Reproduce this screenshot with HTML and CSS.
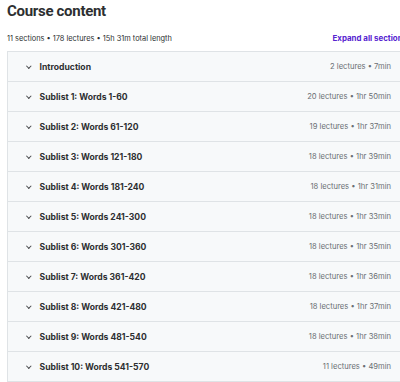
FILE: index.html
```html
<!DOCTYPE html>
<html lang="en">
<head>
    <meta charset="UTF-8">
    <title>Course content</title>
    <link rel="stylesheet" href="styles.css">
</head>
<body>
    <div class="course">
        <h2>Course content</h2>
        <div class="summary">
            <span>11 sections • 178 lectures • 15h 31m total length</span>
            <a href="#">Expand all sections</a>
        </div>

        <div class="sections">
            <div class="row"><span class="chev"></span><span class="name">Introduction</span><span class="meta">2 lectures • 7min</span></div>
            <div class="row"><span class="chev"></span><span class="name">Sublist 1: Words 1-60</span><span class="meta">20 lectures • 1hr 50min</span></div>
            <div class="row"><span class="chev"></span><span class="name">Sublist 2: Words 61-120</span><span class="meta">19 lectures • 1hr 37min</span></div>
            <div class="row"><span class="chev"></span><span class="name">Sublist 3: Words 121-180</span><span class="meta">18 lectures • 1hr 39min</span></div>
            <div class="row"><span class="chev"></span><span class="name">Sublist 4: Words 181-240</span><span class="meta">18 lectures • 1hr 31min</span></div>
            <div class="row"><span class="chev"></span><span class="name">Sublist 5: Words 241-300</span><span class="meta">18 lectures • 1hr 33min</span></div>
            <div class="row"><span class="chev"></span><span class="name">Sublist 6: Words 301-360</span><span class="meta">18 lectures • 1hr 35min</span></div>
            <div class="row"><span class="chev"></span><span class="name">Sublist 7: Words 361-420</span><span class="meta">18 lectures • 1hr 36min</span></div>
            <div class="row"><span class="chev"></span><span class="name">Sublist 8: Words 421-480</span><span class="meta">18 lectures • 1hr 37min</span></div>
            <div class="row"><span class="chev"></span><span class="name">Sublist 9: Words 481-540</span><span class="meta">18 lectures • 1hr 38min</span></div>
            <div class="row"><span class="chev"></span><span class="name">Sublist 10: Words 541-570</span><span class="meta">11 lectures • 49min</span></div>
        </div>
    </div>
</body>
</html>
```
FILE: styles.css
```css
body {
    margin: 0;
    background: #fff;
    font-family: Inter, "Noto Sans", sans-serif;
    color: #2d2f31;
    overflow: hidden;
}

.course {
    padding: 0 0 0 7px;
    width: 400px;
}

h2 {
    margin: 0;
    padding-top: 2px;
    font-family: Roboto, Inter, sans-serif;
    font-size: 15px;
    font-weight: 700;
    line-height: 18px;
    letter-spacing: -0.3px;
}

.summary {
    display: flex;
    justify-content: space-between;
    align-items: center;
    margin-top: 10px;
    height: 16px;
    font-size: 7.4px;
    color: #2d2f31;
}

.summary a {
    color: #5624d0;
    font-weight: 700;
    text-decoration: none;
    font-size: 7.9px;
    white-space: nowrap;
}

.sections {
    margin-top: 5px;
    border: 1px solid #dfe3e6;
    border-bottom: none;
    width: 400px;
}

.row {
    display: flex;
    align-items: center;
    height: 29px;
    border-bottom: 1px solid #dfe3e6;
    background: #f7f9fa;
    padding: 0 17px 0 17px;
}

.chev {
    width: 2.6px;
    height: 2.6px;
    border-right: 1.1px solid #4a4c4e;
    border-bottom: 1.1px solid #4a4c4e;
    transform: rotate(45deg);
    margin: -2px 9px 0 2px;
}

.name {
    flex: 1;
    font-size: 8.6px;
    font-weight: 700;
    color: #2d2f31;
}

.meta {
    font-size: 7.6px;
    color: #6a6f73;
}
```
